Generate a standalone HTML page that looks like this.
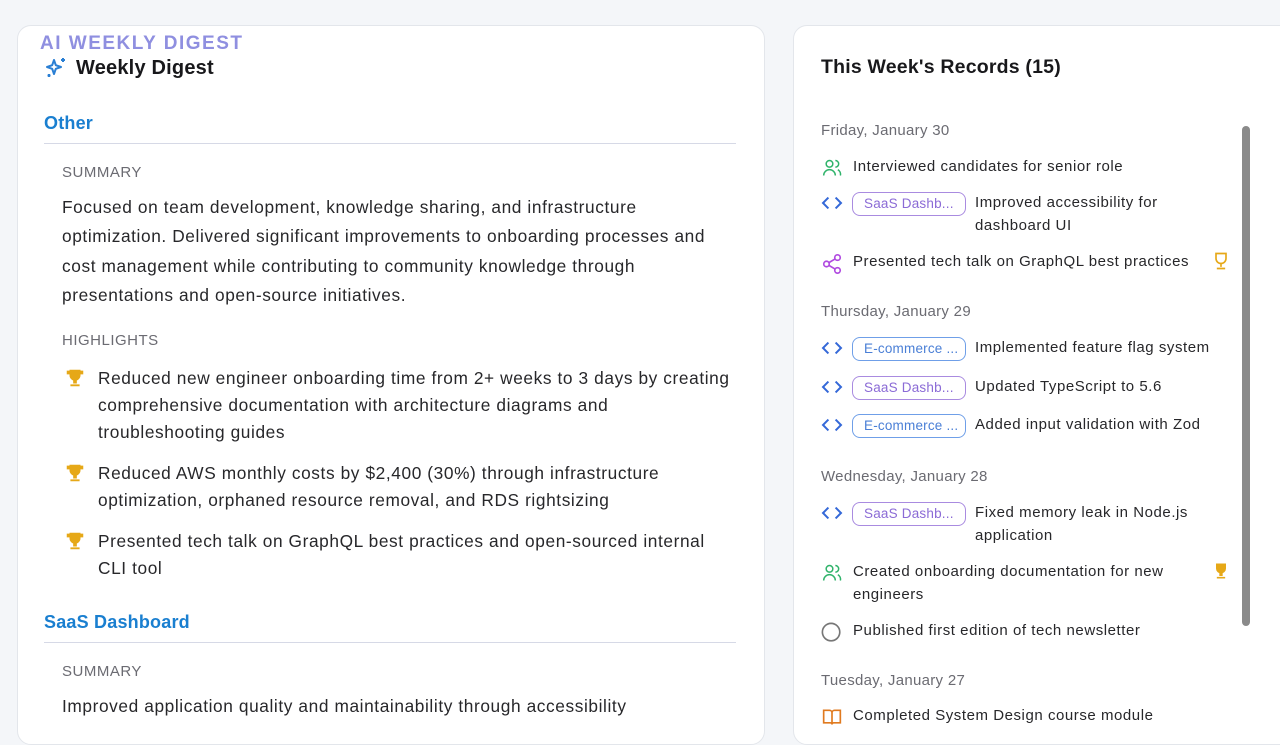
<!DOCTYPE html>
<html><head><meta charset="utf-8"><style>
*{box-sizing:border-box;margin:0;padding:0}
body{width:1280px;height:720px;overflow:hidden;background:#f4f6f9;font-family:"Liberation Sans",sans-serif;color:#27272a;position:relative}
.card{position:absolute;background:#fff;border:1px solid #e3e6eb;border-radius:14px}
#l{left:17px;top:25px;width:748px;height:720px}
#r{left:793px;top:25px;width:520px;height:720px}
.brand{position:absolute;left:40px;top:33px;font-size:19px;font-weight:bold;letter-spacing:1.5px;color:#8f8fe0}
.title{position:absolute;left:44px;top:56px;font-size:20px;font-weight:bold;color:#18181b;display:flex;align-items:center;gap:8px;letter-spacing:.2px}
.sec{position:absolute;left:44px;width:692px;font-size:18px;font-weight:bold;color:#1a7fd0;border-bottom:1px solid #d6d9e6;padding-bottom:9px;letter-spacing:.2px}
.lab{position:absolute;left:62px;font-size:15px;color:#6b6b72;letter-spacing:.5px}
.p{position:absolute;left:62px;width:700px;font-size:17.3px;line-height:29.3px;color:#27272a;letter-spacing:.6px;white-space:nowrap}
.hl{position:absolute;left:62px;width:700px;font-size:17.3px;line-height:27px;padding-left:36px;letter-spacing:.6px;white-space:nowrap}
.hl svg{position:absolute;left:2px;top:2px}
.rt{position:absolute;left:821px;top:56px;font-size:19.5px;font-weight:bold;color:#18181b;letter-spacing:.2px}
.day{position:absolute;left:821px;font-size:15px;color:#6b6b72;letter-spacing:.3px}
.it{position:absolute;left:821px;width:410px;font-size:15px;line-height:22.5px;color:#27272a;letter-spacing:.55px;white-space:nowrap}
.it .ic{position:absolute;left:0;top:2px}
.it .tx{position:absolute;left:32px}
.tag{position:absolute;left:31px;top:0;width:114px;height:24px;border:1px solid #a98be0;border-radius:8px;font-size:13.5px;color:#8b6bd6;line-height:22px;padding-left:11px;letter-spacing:.2px}
.tag.b{border-color:#6f9fe8;color:#4a7fd6}
.tr{position:absolute;right:0;top:0}
.sb{position:absolute;left:1242px;top:126px;width:8px;height:500px;background:#8a8a8a;border-radius:4px}
</style></head><body>
<div class="card" id="l"></div>
<div class="card" id="r"></div>
<div class="brand">AI WEEKLY DIGEST</div>
<div class="title"><svg width="24" height="24" viewBox="0 0 24 24" fill="none" stroke="#2a7fd4" stroke-width="2" stroke-linejoin="round"><path d="M10 4l1.8 5.2L17 11l-5.2 1.8L10 18l-1.8-5.2L3 11l5.2-1.8z"/><path d="M19 2v4M17 4h4M5 18v3M3.5 19.5h3"/></svg>Weekly Digest</div>
<div class="sec" style="top:113px">Other</div>
<div class="lab" style="top:164px">SUMMARY</div>
<div class="p" style="top:193px">Focused on team development, knowledge sharing, and infrastructure<br>optimization. Delivered significant improvements to onboarding processes and<br>cost management while contributing to community knowledge through<br>presentations and open-source initiatives.</div>
<div class="lab" style="top:332px">HIGHLIGHTS</div>
<div class="hl" style="top:365px"><svg width="22" height="22" viewBox="0 0 24 24" fill="#e6a817"><path d="M6 3h12v6a6 6 0 0 1-12 0zM3 4h3v4H3zM18 4h3v4h-3zM10 14h4v4h-4zM7 19h10v2H7z"/></svg>Reduced new engineer onboarding time from 2+ weeks to 3 days by creating<br>comprehensive documentation with architecture diagrams and<br>troubleshooting guides</div>
<div class="hl" style="top:460px"><svg width="22" height="22" viewBox="0 0 24 24" fill="#e6a817"><path d="M6 3h12v6a6 6 0 0 1-12 0zM3 4h3v4H3zM18 4h3v4h-3zM10 14h4v4h-4zM7 19h10v2H7z"/></svg>Reduced AWS monthly costs by $2,400 (30%) through infrastructure<br>optimization, orphaned resource removal, and RDS rightsizing</div>
<div class="hl" style="top:528px"><svg width="22" height="22" viewBox="0 0 24 24" fill="#e6a817"><path d="M6 3h12v6a6 6 0 0 1-12 0zM3 4h3v4H3zM18 4h3v4h-3zM10 14h4v4h-4zM7 19h10v2H7z"/></svg>Presented tech talk on GraphQL best practices and open-sourced internal<br>CLI tool</div>
<div class="sec" style="top:612px">SaaS Dashboard</div>
<div class="lab" style="top:663px">SUMMARY</div>
<div class="p" style="top:692px">Improved application quality and maintainability through accessibility</div>

<div class="rt">This Week's Records (15)</div>
<div class="sb"></div>
<div class="day" style="top:122px">Friday, January 30</div>
<div class="it" style="top:156px"><svg class="ic" width="22" height="20" viewBox="0 0 24 24" fill="none" stroke="#2fb36a" stroke-width="1.8"><circle cx="9" cy="7" r="4"/><path d="M2 21a7 7 0 0 1 14 0M16 3a4 4 0 0 1 0 8M19 14a6 6 0 0 1 3 7"/></svg><span class="tx">Interviewed candidates for senior role</span></div>
<div class="it" style="top:192px"><svg class="ic" width="22" height="18" viewBox="0 0 24 20" fill="none" stroke="#3468d8" stroke-width="2.2"><path d="M8 4l-6 6 6 6M16 4l6 6-6 6"/></svg><span class="tag">SaaS Dashb...</span><span class="tx" style="left:154px">Improved accessibility for<br>dashboard UI</span></div>
<div class="it" style="top:251px"><svg class="ic" width="22" height="22" viewBox="0 0 24 24" fill="none" stroke="#b04ae0" stroke-width="1.8"><circle cx="18" cy="5" r="3"/><circle cx="6" cy="12" r="3"/><circle cx="18" cy="19" r="3"/><path d="M8.6 13.5l6.8 4M15.4 6.5l-6.8 4"/></svg><span class="tx">Presented tech talk on GraphQL best practices</span><svg class="tr" width="20" height="20" viewBox="0 0 24 24" fill="none" stroke="#e6a817" stroke-width="2"><path d="M6 3h12v6a6 6 0 0 1-12 0zM12 15v4M7 21h10"/></svg></div>
<div class="day" style="top:303px">Thursday, January 29</div>
<div class="it" style="top:337px"><svg class="ic" width="22" height="18" viewBox="0 0 24 20" fill="none" stroke="#3468d8" stroke-width="2.2"><path d="M8 4l-6 6 6 6M16 4l6 6-6 6"/></svg><span class="tag b">E-commerce ...</span><span class="tx" style="left:154px">Implemented feature flag system</span></div>
<div class="it" style="top:376px"><svg class="ic" width="22" height="18" viewBox="0 0 24 20" fill="none" stroke="#3468d8" stroke-width="2.2"><path d="M8 4l-6 6 6 6M16 4l6 6-6 6"/></svg><span class="tag">SaaS Dashb...</span><span class="tx" style="left:154px">Updated TypeScript to 5.6</span></div>
<div class="it" style="top:414px"><svg class="ic" width="22" height="18" viewBox="0 0 24 20" fill="none" stroke="#3468d8" stroke-width="2.2"><path d="M8 4l-6 6 6 6M16 4l6 6-6 6"/></svg><span class="tag b">E-commerce ...</span><span class="tx" style="left:154px">Added input validation with Zod</span></div>
<div class="day" style="top:468px">Wednesday, January 28</div>
<div class="it" style="top:502px"><svg class="ic" width="22" height="18" viewBox="0 0 24 20" fill="none" stroke="#3468d8" stroke-width="2.2"><path d="M8 4l-6 6 6 6M16 4l6 6-6 6"/></svg><span class="tag">SaaS Dashb...</span><span class="tx" style="left:154px">Fixed memory leak in Node.js<br>application</span></div>
<div class="it" style="top:561px"><svg class="ic" width="22" height="20" viewBox="0 0 24 24" fill="none" stroke="#2fb36a" stroke-width="1.8"><circle cx="9" cy="7" r="4"/><path d="M2 21a7 7 0 0 1 14 0M16 3a4 4 0 0 1 0 8M19 14a6 6 0 0 1 3 7"/></svg><span class="tx">Created onboarding documentation for new<br>engineers</span><svg class="tr" width="20" height="20" viewBox="0 0 24 24" fill="#e6a817"><path d="M6 3h12v6a6 6 0 0 1-12 0zM10 14h4v4h-4zM7 19h10v2H7z"/></svg></div>
<div class="it" style="top:620px"><svg class="ic" width="22" height="22" viewBox="0 0 24 24" fill="none" stroke="#777" stroke-width="1.8"><circle cx="11" cy="11" r="9.5"/></svg><span class="tx">Published first edition of tech newsletter</span></div>
<div class="day" style="top:672px">Tuesday, January 27</div>
<div class="it" style="top:705px"><svg class="ic" width="22" height="20" viewBox="0 0 24 24" fill="none" stroke="#e07a1f" stroke-width="2"><path d="M2 4h7a3 3 0 0 1 3 3v14a2 2 0 0 0-2-2H2zM22 4h-7a3 3 0 0 0-3 3v14a2 2 0 0 1 2-2h8z"/></svg><span class="tx">Completed System Design course module</span></div>
</body></html>
